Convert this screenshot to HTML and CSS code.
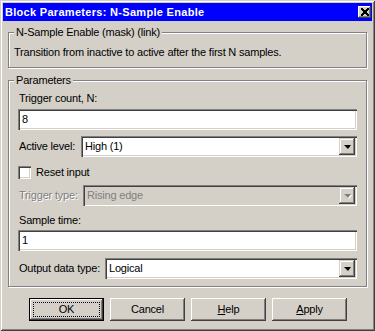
FILE: index.html
```html
<!DOCTYPE html>
<html>
<head>
<meta charset="utf-8">
<link rel="stylesheet" href="styles.css">
</head>
<body>
<div class="window">
  <div class="titlebar">
    <span class="title">Block Parameters: N-Sample Enable</span>
    <span class="close"><svg width="9" height="8" viewBox="0 0 9 8"><path d="M1 0.5 L8 7.5 M2 0.5 L9 7.5 M8 0.5 L1 7.5 M9 0.5 L2 7.5" stroke="#000" stroke-width="1" fill="none" shape-rendering="crispEdges"/></svg></span>
  </div>
  <div class="group group-desc">
    <span class="legend">N-Sample Enable (mask) (link)</span>
    <p class="desc">Transition from inactive to active after the first N samples.</p>
  </div>
  <div class="group group-params">
    <span class="legend">Parameters</span>
    <div class="label label-first">Trigger count, N:</div>
    <div class="edit">8</div>
    <div class="row row-active">
      <span class="row-label">Active level:</span>
      <div class="popup"><span class="popup-text">High (1)</span><span class="arrow-btn"><span class="arrow"></span></span></div>
    </div>
    <div class="check-row">
      <span class="checkbox"></span>
      <span class="check-label">Reset input</span>
    </div>
    <div class="row row-trigger disabled">
      <span class="row-label">Trigger type:</span>
      <div class="popup popup-disabled"><span class="popup-text">Rising edge</span><span class="arrow-btn"><span class="arrow"></span></span></div>
    </div>
    <div class="label label-sample">Sample time:</div>
    <div class="edit">1</div>
    <div class="row row-output">
      <span class="row-label">Output data type:</span>
      <div class="popup"><span class="popup-text">Logical</span><span class="arrow-btn"><span class="arrow"></span></span></div>
    </div>
  </div>
  <div class="buttons">
    <div class="btn btn-default"><span class="focus">OK</span></div>
    <div class="btn">Cancel</div>
    <div class="btn"><span><u>H</u>elp</span></div>
    <div class="btn"><span><u>A</u>pply</span></div>
  </div>
</div>
</body>
</html>
```
FILE: styles.css
```css
* { box-sizing: border-box; }
html, body { margin: 0; padding: 0; }
body {
  width: 375px;
  height: 331px;
  overflow: hidden;
  background: #d4d0c8;
  font-family: "Liberation Sans", Arial, sans-serif;
  font-size: 11px;
  line-height: 13px;
  letter-spacing: -0.2px;
  color: #000;
}
.window {
  width: 375px;
  height: 331px;
  padding: 3px;
  background: #d4d0c8;
  box-shadow: inset 1px 1px #d4d0c8, inset -1px -1px #404040, inset 2px 2px #fff, inset -2px -2px #808080;
}
.titlebar {
  height: 18px;
  background: #0000ff;
  display: flex;
  align-items: center;
  justify-content: space-between;
  padding: 0 1px 0 2px;
}
.title {
  color: #fff;
  font-weight: bold;
  font-size: 11px;
  line-height: 13px;
  letter-spacing: 0.3px;
}
.close {
  width: 13px;
  height: 12px;
  background: #d4d0c8;
  box-shadow: inset -1px -1px #404040, inset 1px 1px #fff, inset -2px -2px #808080;
  display: flex;
  align-items: center;
  justify-content: center;
}
.close svg { display: block; }

.group {
  position: relative;
  width: 359px;
  margin-left: 5px;
  border: 1px solid #808080;
  box-shadow: 1px 1px 0 #fff, inset 1px 1px 0 #fff;
}
.legend {
  position: absolute;
  left: 5px;
  top: -7px;
  padding: 0 2px;
  background: #d4d0c8;
  line-height: 13px;
}
.group-desc {
  margin-top: 11px;
  height: 36px;
  padding: 13px 5px 0;
}
.desc { margin: 0; }
.group-params {
  margin-top: 12px;
  padding: 0 9px 7px;
}
.label { line-height: 13px; padding-left: 1px; }
.label-first { margin-top: 11px; margin-bottom: 4px; }
.label-sample { margin-top: 8px; margin-bottom: 3px; }

.edit {
  height: 21px;
  background: #fff;
  padding: 4px 4px 0;
  box-shadow: inset 1px 1px #808080, inset 2px 2px #404040, inset -1px -1px #fff, inset -2px -2px #d4d0c8;
}
.row {
  display: flex;
  align-items: center;
  height: 21px;
}
.row-label {
  flex: none;
  padding-left: 1px;
  white-space: nowrap;
}
.row-active { margin-top: 6px; }
.row-active .row-label { width: 63px; }
.row-trigger { margin-top: 6px; }
.row-trigger .row-label { width: 65px; }
.row-output { margin-top: 7px; }
.row-output .row-label { width: 87px; }
.popup {
  flex: 1;
  height: 21px;
  display: flex;
  align-items: center;
  justify-content: space-between;
  padding: 2px;
  background: #fff;
  box-shadow: inset 1px 1px #808080, inset 2px 2px #404040, inset -1px -1px #fff, inset -2px -2px #d4d0c8;
}
.popup-text { padding-left: 2px; }
.arrow-btn {
  width: 16px;
  height: 17px;
  background: #d4d0c8;
  box-shadow: inset -1px -1px #404040, inset 1px 1px #d4d0c8, inset -2px -2px #808080, inset 2px 2px #fff;
  display: flex;
  align-items: center;
  justify-content: center;
}
.arrow {
  width: 0;
  height: 0;
  border-left: 4px solid transparent;
  border-right: 3px solid transparent;
  border-top: 4px solid #000;
  margin-top: 1px;
}
.disabled .row-label { color: #808080; text-shadow: 1px 1px 0 #fff; }
.popup-disabled { background: #d4d0c8; }
.popup-disabled .popup-text { color: #808080; }
.popup-disabled .arrow { border-top-color: #808080; filter: drop-shadow(1px 1px 0 #fff); }

.check-row {
  display: flex;
  align-items: center;
  margin-top: 9px;
  height: 13px;
  gap: 5px;
}
.checkbox {
  width: 13px;
  height: 13px;
  background: #fff;
  box-shadow: inset 1px 1px #808080, inset 2px 2px #404040, inset -1px -1px #fff, inset -2px -2px #d4d0c8;
}

.buttons {
  display: flex;
  gap: 6px;
  margin-top: 11px;
  margin-left: 26px;
}
.btn {
  width: 75px;
  height: 23px;
  display: flex;
  align-items: center;
  justify-content: center;
  background: #d4d0c8;
  box-shadow: inset -1px -1px #404040, inset 1px 1px #fff, inset -2px -2px #808080, inset 2px 2px #d4d0c8;
}
.btn u { text-decoration-thickness: 1px; text-underline-offset: 1px; }
.btn-default {
  border: 1px solid #000;
  padding: 3px;
}
.focus {
  display: flex;
  align-items: center;
  justify-content: center;
  width: 100%;
  height: 100%;
  border: 1px dotted #000;
}
```
